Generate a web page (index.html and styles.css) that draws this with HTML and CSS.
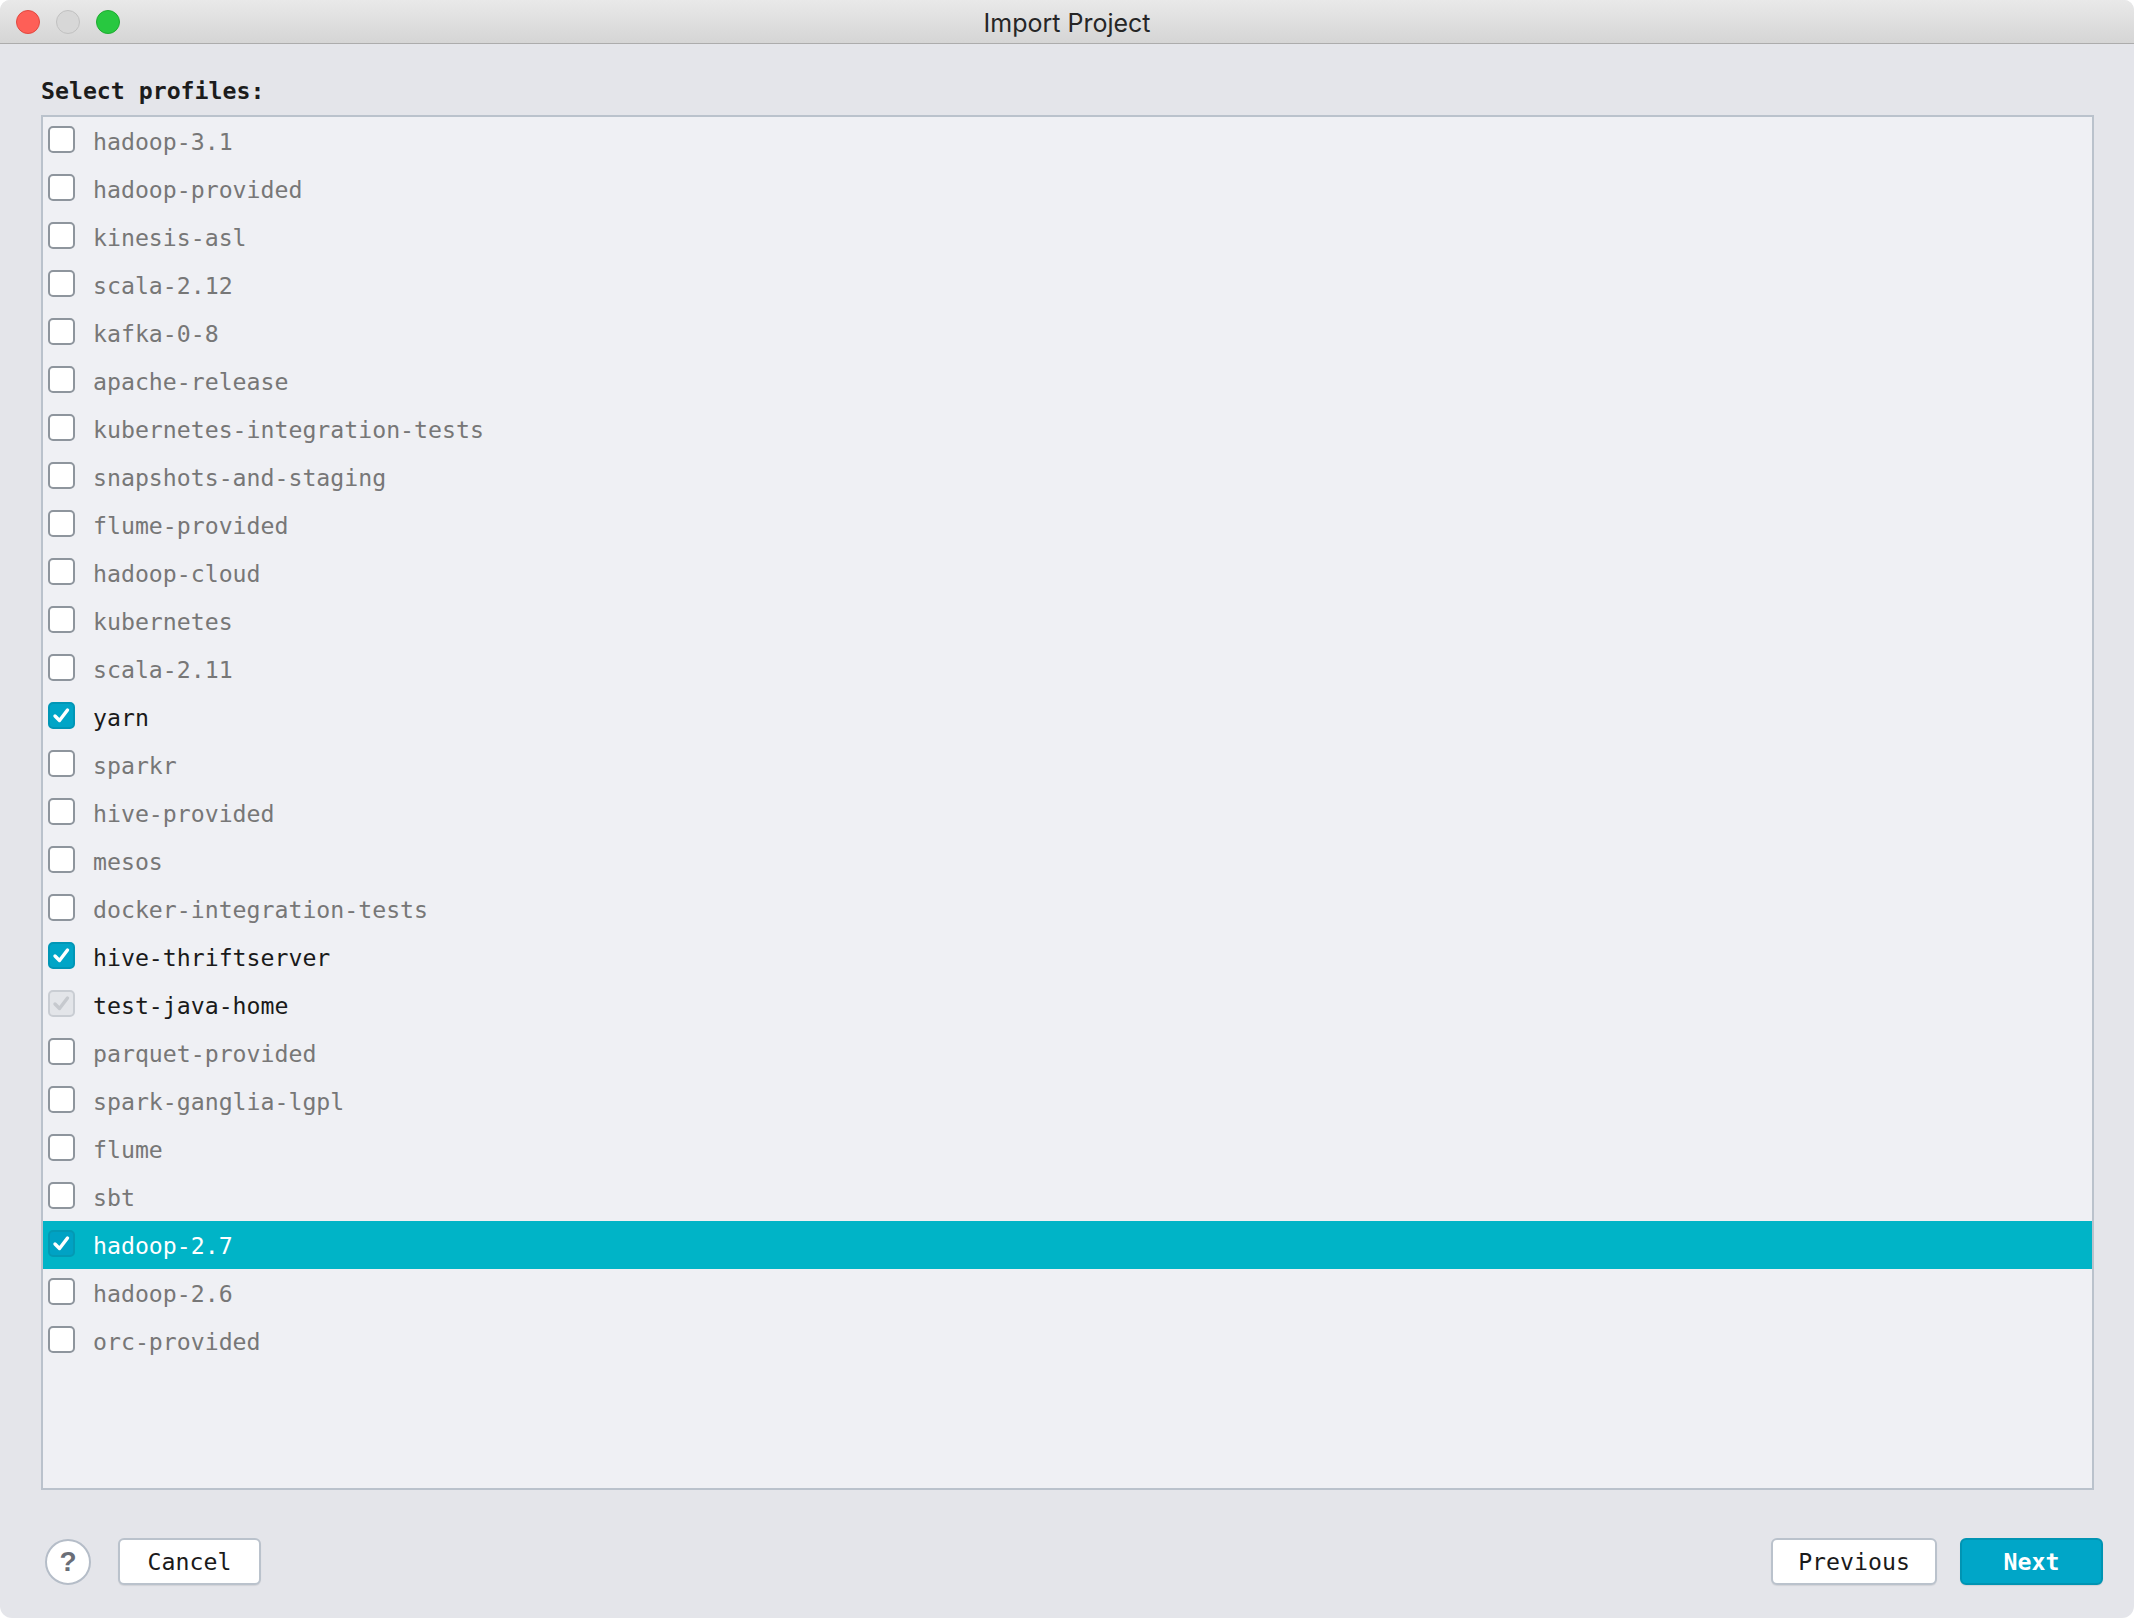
FILE: index.html
```html
<!DOCTYPE html>
<html lang="en">
<head>
  <meta charset="UTF-8" />
  <title>Import Project</title>
  <link rel="stylesheet" href="styles.css">
</head>
<body>

  <div class="window">
    <div class="titlebar">
      <div class="lights">
        <span class="light close"></span>
        <span class="light min"></span>
        <span class="light zoom"></span>
      </div>
      <div class="title">Import Project</div>
    </div>

    <div class="content">
      <div class="label">Select profiles:</div>

      <ul class="profiles">
        <li><span class="box"></span>hadoop-3.1</li>
        <li><span class="box"></span>hadoop-provided</li>
        <li><span class="box"></span>kinesis-asl</li>
        <li><span class="box"></span>scala-2.12</li>
        <li><span class="box"></span>kafka-0-8</li>
        <li><span class="box"></span>apache-release</li>
        <li><span class="box"></span>kubernetes-integration-tests</li>
        <li><span class="box"></span>snapshots-and-staging</li>
        <li><span class="box"></span>flume-provided</li>
        <li><span class="box"></span>hadoop-cloud</li>
        <li><span class="box"></span>kubernetes</li>
        <li><span class="box"></span>scala-2.11</li>
        <li class="checked"><span class="box"><svg viewBox="0 0 23 23"><path d="M5 12 L9.5 16.5 L17.5 6"/></svg></span>yarn</li>
        <li><span class="box"></span>sparkr</li>
        <li><span class="box"></span>hive-provided</li>
        <li><span class="box"></span>mesos</li>
        <li><span class="box"></span>docker-integration-tests</li>
        <li class="checked"><span class="box"><svg viewBox="0 0 23 23"><path d="M5 12 L9.5 16.5 L17.5 6"/></svg></span>hive-thriftserver</li>
        <li class="implied"><span class="box"><svg viewBox="0 0 23 23"><path d="M5 12 L9.5 16.5 L17.5 6"/></svg></span>test-java-home</li>
        <li><span class="box"></span>parquet-provided</li>
        <li><span class="box"></span>spark-ganglia-lgpl</li>
        <li><span class="box"></span>flume</li>
        <li><span class="box"></span>sbt</li>
        <li class="checked selected"><span class="box"><svg viewBox="0 0 23 23"><path d="M5 12 L9.5 16.5 L17.5 6"/></svg></span>hadoop-2.7</li>
        <li><span class="box"></span>hadoop-2.6</li>
        <li><span class="box"></span>orc-provided</li>
      </ul>

      <div class="footer">
        <button class="help">?</button>
        <button class="btn">Cancel</button>
        <div class="spacer"></div>
        <button class="btn prev">Previous</button>
        <button class="btn primary">Next</button>
      </div>
    </div>
  </div>

</body>
</html>
```

FILE: styles.css
```css
body {
  margin: 0;
  background: #ffffff;
  font-family: "DejaVu Sans Mono", "Liberation Mono", monospace;
}
.window {
  width: 2134px;
  height: 1618px;
  background: #e4e5ea;
  border-radius: 10px 10px 12px 12px;
  overflow: hidden;
  display: flex;
  flex-direction: column;
}
.titlebar {
  position: relative;
  height: 43px;
  flex: none;
  background: linear-gradient(#e9e9e9, #d5d5d5);
  border-bottom: 1px solid #acacac;
  display: flex;
  align-items: center;
  justify-content: center;
}
.lights {
  position: absolute;
  left: 16px;
  top: 10px;
  display: flex;
  gap: 16px;
}
.light {
  width: 22px;
  height: 22px;
  border-radius: 50%;
  border: 1px solid transparent;
}
.light.close {
  background: #fe5f57;
  border-color: #e1483f;
}
.light.min {
  background: #d7d7d7;
  border-color: #c0c0c0;
}
.light.zoom {
  background: #28c840;
  border-color: #1eab30;
}
.title {
  font-family: Inter, "Liberation Sans", sans-serif;
  font-size: 25px;
  color: #262626;
  padding-top: 2px;
}
.content {
  flex: 1;
  display: flex;
  flex-direction: column;
  padding: 33px 40px 0 41px;
}
.label {
  font-weight: bold;
  font-size: 23.2px;
  line-height: 28px;
  color: #1c1c1c;
  margin-bottom: 10px;
}
.profiles {
  list-style: none;
  margin: 0;
  padding: 0;
  height: 1371px;
  background: #eff0f4;
  border: 2px solid #bac2cc;
}
.profiles li {
  height: 48px;
  display: flex;
  align-items: center;
  padding-left: 5px;
  font-size: 23.2px;
  color: #777777;
}
.box {
  width: 23px;
  height: 23px;
  flex: none;
  margin-right: 18px;
  margin-top: -3px;
  border: 2px solid #8e959d;
  border-radius: 5px;
  background: #ffffff;
  display: flex;
}
.box svg {
  width: 100%;
  height: 100%;
  fill: none;
  stroke: #ffffff;
  stroke-width: 3.4;
  stroke-linecap: round;
  stroke-linejoin: round;
}
.profiles li.checked {
  color: #1a1a1a;
}
.checked .box {
  background: #00a5c7;
  border-color: #0096b6;
}
.profiles li.implied {
  color: #1a1a1a;
}
.implied .box {
  background: #e3e5e9;
  border-color: #c9cdd3;
}
.implied .box svg {
  stroke: #c6c9ce;
}
.profiles li.selected {
  background: #00b4c7;
  color: #ffffff;
}
.selected .box {
  background: #00a2c4;
  border-color: #0399b4;
}
.footer {
  display: flex;
  align-items: center;
  margin-top: 48px;
  padding-left: 4px;
  margin-right: -9px;
}
.footer button {
  font-family: "DejaVu Sans Mono", "Liberation Mono", monospace;
  font-size: 23.2px;
  cursor: pointer;
}
.help {
  width: 46px;
  height: 46px;
  border-radius: 50%;
  border: 2px solid #b5bdc8;
  background: #ffffff;
  color: #6a6e77;
  font-family: "Liberation Sans", Arial, sans-serif !important;
  font-weight: bold;
  font-size: 28px !important;
  padding: 0;
  margin-right: 27px;
}
.btn {
  height: 47px;
  width: 143px;
  border: 2px solid #bac2cc;
  border-radius: 6px;
  background: #ffffff;
  color: #1a1a1a;
  padding: 0;
  box-shadow: 0 1px 1px rgba(0, 0, 0, 0.08);
}
.spacer {
  flex: 1;
}
.btn.prev {
  width: 166px;
  margin-right: 23px;
}
.btn.primary {
  background: #00a6c8;
  border-color: #0094b3;
  color: #ffffff;
  font-weight: bold;
}
```
